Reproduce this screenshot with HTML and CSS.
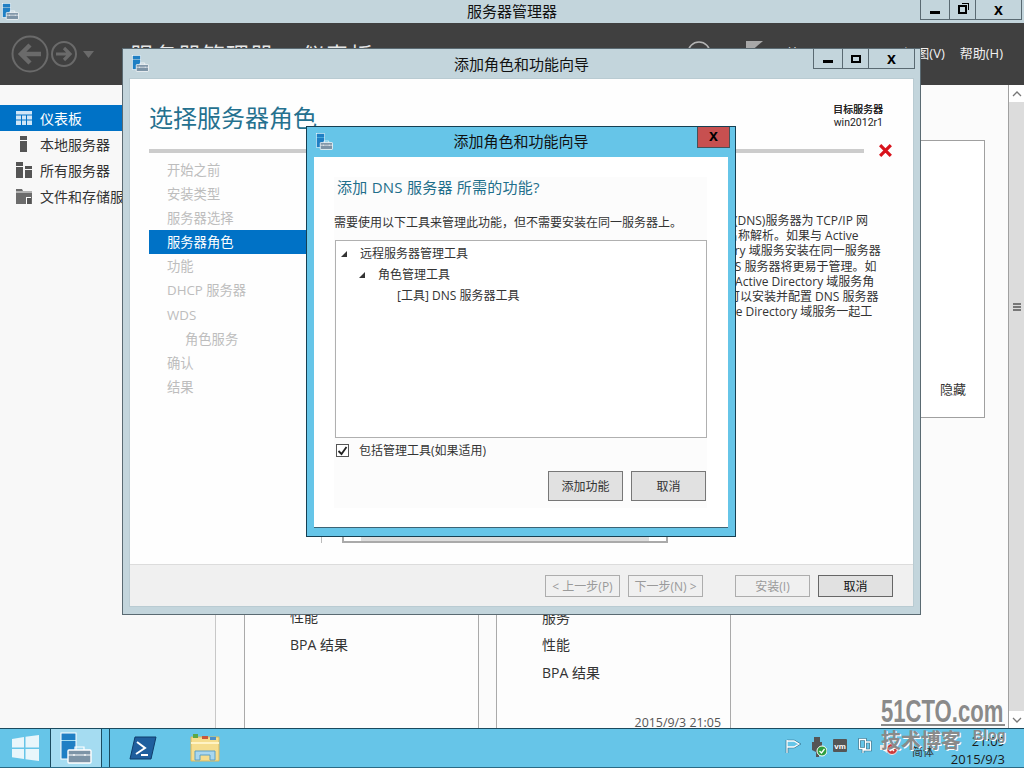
FILE: index.html
```html
<!DOCTYPE html>
<html lang="zh-CN">
  <head>
    <meta charset="UTF-8" />
    <title>服务器管理器</title>
    <link rel="stylesheet" href="styles.css">
  </head>
  <body>
    <svg class="defs" width="0" height="0">
      <symbol id="appIcon" viewBox="0 0 32 32">
        <rect x="1" y="1" width="15" height="7" fill="#1f7fc4"/>
        <rect x="1" y="9" width="15" height="18" fill="#1f7fc4"/>
        <rect x="1" y="1" width="15" height="26" fill="none" stroke="#fff" stroke-width="1"/>
        <rect x="8" y="18" width="23" height="13" rx="1" fill="#7d93a6" stroke="#fff" stroke-width="1.400"/>
        <path d="M15 18v-3h9v3M8 23h23M14 22v2M25 22v2" fill="none" stroke="#fff" stroke-width="1.200"/>
      </symbol>
    </svg>

    <div class="desktop">
      <!-- Главное окно -->
      <div class="titlebar">
        <svg class="app-icon"><use href="#appIcon"/></svg>
        <span class="title">服务器管理器</span>
        <div class="controls">
          <span class="ctl ctl-min"><i class="glyph-min"></i></span>
          <span class="ctl ctl-max"><i class="glyph-restore"></i></span>
          <span class="ctl ctl-close">x</span>
        </div>
      </div>

      <div class="navbar">
        <svg class="nav-arrows" width="100" height="44" viewBox="0 0 100 44">
          <g fill="none" stroke="#6a6a6a">
            <circle cx="19" cy="22" r="17.500" stroke-width="2"/>
            <path d="M30 22H11M19 13l-9 9 9 9" stroke-width="4.500"/>
            <circle cx="53" cy="22" r="12" stroke-width="2"/>
            <path d="M45 22h14M53 16l6 6-6 6" stroke-width="3.200"/>
          </g>
          <path d="M72 19h11l-5.500 7z" fill="#6a6a6a"/>
        </svg>
        <div class="breadcrumb">服务器管理器 <span class="dot">•</span> 仪表板</div>
        <svg class="nav-tools" width="90" height="30" viewBox="0 0 90 30">
          <circle cx="17" cy="13" r="11" fill="none" stroke="#b5b5b5" stroke-width="1.500"/>
          <path d="M44 8v12" stroke="#b5b5b5" stroke-width="1.500"/>
          <path d="M64 1h17L68 12h-4z" fill="#a8a8a8"/>
        </svg>
        <div class="menu">
          <span>管理(M)</span>
          <span>工具(T)</span>
          <span>视图(V)</span>
          <span>帮助(H)</span>
        </div>
      </div>

      <div class="main">
        <aside class="sidebar">
          <div class="side-item active">
            <svg width="16" height="16" viewBox="0 0 16 16"><path d="M0 1h16v14H0z" fill="#cfe6f7"/><path d="M0 5h16M0 10h16M5.500 5v10M10.500 5v10" stroke="#0072c6"/></svg>
            <span>仪表板</span>
          </div>
          <div class="side-item">
            <svg width="16" height="16" viewBox="0 0 16 16"><path d="M4 0h7v4H4zM4 5h7v11H4z" fill="#555"/></svg>
            <span>本地服务器</span>
          </div>
          <div class="side-item">
            <svg width="16" height="16" viewBox="0 0 16 16"><path d="M0 0h7v4H0zM0 5h7v11H0zM9 4h7v3H9zM9 8h7v8H9z" fill="#555"/></svg>
            <span>所有服务器</span>
          </div>
          <div class="side-item">
            <svg width="16" height="16" viewBox="0 0 16 16"><path d="M0 1h6l1 2h9v13H0z" fill="#6c6c6c"/><path d="M0 4h16" stroke="#f8f8f8"/><path d="M10 9h5v7h-5z" fill="#fff"/><path d="M11 10h4v6h-4z" fill="#555"/></svg>
            <span>文件和存储服务</span>
          </div>
        </aside>

        <section class="content">
          <div class="cards">
            <div class="card">
              <p>性能</p>
              <p>BPA 结果</p>
            </div>
            <div class="card card-wide">
              <p>服务</p>
              <p>性能</p>
              <p>BPA 结果</p>
              <time class="stamp">2015/9/3 21:05</time>
            </div>
          </div>
          <div class="hide-panel"><span>隐藏</span></div>
        </section>

        <div class="scrollbar">
          <span class="sb-btn">
            <svg width="10" height="6" viewBox="0 0 10 6"><path d="M1 5l4-4 4 4" fill="none" stroke="#777" stroke-width="1.300"/></svg>
          </span>
          <span class="sb-track"><i></i></span>
          <span class="sb-btn">
            <svg width="10" height="6" viewBox="0 0 10 6"><path d="M1 1l4 4 4-4" fill="none" stroke="#777" stroke-width="1.300"/></svg>
          </span>
        </div>
      </div>

      <!-- Панель задач -->
      <footer class="taskbar">
        <div class="task task-start">
          <svg width="27" height="26" viewBox="0 0 27 26"><path d="M0 4l12-2v10.500H0zM13.500 1.700L27 0v12.500H13.500zM0 14h12v10L0 22.300zM13.500 14H27v12l-13.500-1.800z" fill="#e8f6fb"/></svg>
        </div>
        <div class="task task-active"><svg class="task-app"><use href="#appIcon"/></svg></div>
        <div class="task-sep"></div>
        <div class="task task-ps">
          <svg width="28" height="24" viewBox="0 0 28 24"><path d="M6 1h21l-5 22H1z" fill="#1f5f9e" stroke="#0f3d6b"/><path d="M8 6l8 6-9 6" fill="none" stroke="#fff" stroke-width="2"/><path d="M12 19h7" stroke="#fff" stroke-width="2"/></svg>
        </div>
        <div class="task task-folder">
          <svg width="32" height="30" viewBox="0 0 32 30"><path d="M2 4h28v24H2z" fill="#f5dd8e" stroke="#d9b860"/><path d="M2 10h28" stroke="#fff3c4" stroke-width="2"/><path d="M4 1h5v4H4z" fill="#5aa845"/><path d="M13 3h6v3h-6z" fill="#c9573a"/><path d="M21 4h6v3h-6z" fill="#4b8fc9"/><path d="M6 27V18h20v9h-5v-5H11v5z" fill="#a8d7ef" stroke="#5d9fc4"/></svg>
        </div>
        <div class="tray">
          <svg class="tray-flag" width="16" height="14" viewBox="0 0 16 14"><path d="M2 1v13M2 2h7l5 3-5 3H2" fill="none" stroke="#2f6a84" stroke-width="2.600"/><path d="M2 1v13M2 2h7l5 3-5 3H2z" fill="#66c5e8" stroke="#fff" stroke-width="1.300"/></svg>
          <svg class="tray-usb" width="15" height="20" viewBox="0 0 15 20"><path d="M2 0h6v5H2zM0 5h10v8l-3 2v5H4v-5l-4-2z" fill="#555"/><circle cx="10" cy="14" r="5" fill="#2f9e3f" stroke="#fff"/><path d="M7.500 14l2 2 3-4" fill="none" stroke="#fff" stroke-width="1.300"/></svg>
          <svg class="tray-vm" width="14" height="13" viewBox="0 0 14 13"><rect width="14" height="13" rx="1" fill="#555"/><text x="7" y="9.500" class="vm-text">vm</text></svg>
          <svg class="tray-net" width="14" height="17" viewBox="0 0 14 17"><path d="M1.500 1.500h6v9h-6zM8 4h4.500v8H5v3" fill="none" stroke="#2f6a84" stroke-width="2.600"/><path d="M1.500 1.500h6v9h-6zM8 4h4.500v8H5v3" fill="none" stroke="#fff" stroke-width="1.300"/></svg>
          <svg class="tray-vol" width="18" height="14" viewBox="0 0 18 14"><path d="M0 4h3l4-3v11L3 9H0z" fill="#e8e8e8"/><circle cx="12" cy="8" r="5.500" fill="#cc3b3b" stroke="#eee"/><path d="M10 6l4 4M14 6l-4 4" stroke="#fff" stroke-width="1.300"/></svg>
          <span class="tray-lang">简体</span>
          <div class="clock">
            <span>21:09</span>
            <span>2015/9/3</span>
          </div>
        </div>
      </footer>

      <!-- Мастер -->
      <div class="window wizard">
        <div class="win-title">
          <svg class="app-icon"><use href="#appIcon"/></svg>
          <span class="title">添加角色和功能向导</span>
          <div class="controls">
            <span class="ctl ctl-min"><i class="glyph-min"></i></span>
            <span class="ctl ctl-max2"><i class="glyph-max"></i></span>
            <span class="ctl ctl-close2">x</span>
          </div>
        </div>
        <div class="wiz-body">
          <div class="wiz-main">
            <div class="wiz-head">
              <h1>选择服务器角色</h1>
              <div class="target">
                <strong>目标服务器</strong>
                <span>win2012r1</span>
              </div>
            </div>
            <div class="rule-row">
              <div class="rule"></div>
              <svg width="15" height="15" viewBox="0 0 14 14"><path d="M2 2l10 10M12 2L2 12" stroke="#d8121b" stroke-width="3"/></svg>
            </div>
            <div class="wiz-cols">
              <ul class="steps">
                <li>开始之前</li>
                <li>安装类型</li>
                <li>服务器选择</li>
                <li class="current">服务器角色</li>
                <li>功能</li>
                <li>DHCP 服务器</li>
                <li>WDS</li>
                <li class="sub">角色服务</li>
                <li>确认</li>
                <li>结果</li>
              </ul>
              <div class="roles">
                <div class="roles-list"></div>
                <div class="roles-hscroll">
                  <span class="hs-btn"></span><span class="hs-thumb">≡</span><span class="hs-btn"></span>
                </div>
              </div>
              <div class="desc">
                <span>域名系统(DNS)服务器为 TCP/IP 网</span>
                <span>络提供名称解析。如果与 Active</span>
                <span>Directory 域服务安装在同一服务器</span>
                <span>上，DNS 服务器将更易于管理。如</span>
                <span>果选择 Active Directory 域服务角</span>
                <span>色，则可以安装并配置 DNS 服务器</span>
                <span>和 Active Directory 域服务一起工</span>
              </div>
            </div>
          </div>
          <div class="wiz-foot">
            <button class="btn" disabled>&lt; 上一步(P)</button>
            <button class="btn" disabled>下一步(N) &gt;</button>
            <button class="btn btn-gap" disabled>安装(I)</button>
            <button class="btn btn-default">取消</button>
          </div>
        </div>
      </div>

      <!-- Диалог -->
      <div class="window dialog">
        <div class="win-title dlg-title">
          <svg class="app-icon"><use href="#appIcon"/></svg>
          <span class="title">添加角色和功能向导</span>
          <span class="dlg-close">x</span>
        </div>
        <div class="dlg-body">
          <div class="dlg-inner">
            <h2>添加 DNS 服务器 所需的功能?</h2>
            <p class="dlg-text">需要使用以下工具来管理此功能，但不需要安装在同一服务器上。</p>
            <div class="tree">
              <div class="tree-row"><i class="tri"></i>远程服务器管理工具</div>
              <div class="tree-row lvl2"><i class="tri"></i>角色管理工具</div>
              <div class="tree-row lvl3">[工具] DNS 服务器工具</div>
            </div>
            <label class="check">
              <span class="box">
                <svg width="11" height="10" viewBox="0 0 11 10"><path d="M1.500 5l3 3 5-7" fill="none" stroke="#222" stroke-width="1.800"/></svg>
              </span>
              包括管理工具(如果适用)
            </label>
            <div class="dlg-btns">
              <button class="btn-dlg">添加功能</button>
              <button class="btn-dlg">取消</button>
            </div>
          </div>
        </div>
      </div>

      <!-- Водяной знак -->
      <div class="watermark">
        <div class="wm-top"><span>51CTO.com</span></div>
        <div class="wm-bottom">技术博客<span>Blog</span></div>
      </div>
    </div>
  </body>
</html>
```

FILE: styles.css
```css
* {
  box-sizing: border-box;
}

html, body {
  margin: 0;
  padding: 0;
}

body {
  width: 1024px;
  height: 768px;
  overflow: hidden;
  font-family: "Open Sans", "Noto Sans CJK SC", sans-serif;
  font-size: 13px;
  color: #333;
}

.defs {
  position: absolute;
}

.desktop {
  position: relative;
  width: 1024px;
  height: 768px;
  display: flex;
  flex-direction: column;
  overflow: hidden;
}

/* title bars */
.titlebar {
  position: relative;
  height: 23px;
  flex: none;
  background: #c3d5dc;
  display: flex;
  justify-content: center;
}

.title {
  font-size: 15px;
  line-height: 22px;
  color: #111;
}

.app-icon {
  position: absolute;
  left: 2px;
  top: 3px;
  width: 17px;
  height: 17px;
}

.controls {
  position: absolute;
  right: 2px;
  top: 0;
  display: flex;
  height: 20px;
  border: 1px solid #5a6a72;
  border-top: 0;
}

.ctl {
  display: flex;
  align-items: center;
  justify-content: center;
  height: 19px;
  border-left: 1px solid #5a6a72;
  font: bold 13px/1 "Liberation Sans", sans-serif;
  color: #000;
}

.ctl:first-child {
  border-left: 0;
}

.ctl-min {
  width: 28px;
}

.ctl-max {
  width: 26px;
}

.ctl-max2 {
  width: 26px;
}

.ctl-close {
  width: 46px;
  font-size: 16px;
}

.ctl-close2 {
  width: 46px;
  font-size: 16px;
}

.glyph-min {
  width: 10px;
  height: 3px;
  margin-top: 6px;
  background: #000;
}

.glyph-max {
  width: 10px;
  height: 8px;
  border: 2px solid #000;
}

.glyph-restore {
  width: 9px;
  height: 9px;
  border: 2px solid #000;
  box-shadow: 2px -2px 0 -1px #c3d5dc, 3px -3px 0 -1px #000;
}

/* nav */
.navbar {
  position: relative;
  height: 62px;
  flex: none;
  background: #404040;
  display: flex;
  align-items: center;
  padding-left: 11px;
}

.nav-arrows {
  flex: none;
}

.breadcrumb {
  margin-left: 19px;
  font-size: 23px;
  letter-spacing: 1px;
  color: #e6e6e6;
  white-space: nowrap;
}

.dot {
  margin: 0 2px;
}

.nav-tools {
  position: absolute;
  left: 682px;
  top: 17px;
}

.menu {
  position: absolute;
  right: 21px;
  top: 20px;
  display: flex;
  gap: 15px;
  color: #f0f0f0;
  font-size: 13px;
  white-space: nowrap;
}

/* main area */
.main {
  flex: 1;
  display: flex;
  background: #f7f7f7;
  min-height: 0;
}

.sidebar {
  width: 216px;
  flex: none;
  padding-top: 20px;
  border-right: 1px solid #c8c8c8;
  background: #f8f8f8;
}

.side-item {
  height: 26px;
  display: flex;
  align-items: center;
  gap: 8px;
  padding-left: 16px;
  font-size: 14px;
  color: #333;
  white-space: nowrap;
}

.side-item.active {
  background: #0072c6;
  color: #fff;
}

.content {
  position: relative;
  flex: 1;
  display: flex;
  padding-left: 28px;
  background: #fbfbfb;
}

.cards {
  display: flex;
  gap: 17px;
}

.card {
  position: relative;
  width: 235px;
  background: #fdfdfd;
  border: 1px solid #aaa;
  border-width: 0 1px;
  display: flex;
  flex-direction: column;
  justify-content: flex-end;
  padding: 0 0 70px 45px;
  font-size: 14px;
  color: #333;
}

.card-wide {
  padding-bottom: 42px;
}

.card p {
  margin: 0;
  height: 27.500px;
  line-height: 27.500px;
}

.stamp {
  position: absolute;
  right: 9px;
  bottom: -3px;
  font-size: 12.400px;
  color: #555;
  white-space: nowrap;
}

.hide-panel {
  position: absolute;
  left: 704px;
  top: 55px;
  width: 65px;
  height: 278px;
  background: #fff;
  border: 1px solid #a0a0a0;
  display: flex;
  align-items: flex-end;
  padding: 0 0 19px 19px;
}

.scrollbar {
  width: 16px;
  flex: none;
  display: flex;
  flex-direction: column;
  border-left: 1px solid #a0a0a0;
}

.sb-btn {
  height: 17px;
  flex: none;
  background: #fff;
  display: flex;
  align-items: center;
  justify-content: center;
}

.sb-track {
  flex: 1;
  background: #dcdcdc;
  display: flex;
  align-items: center;
  justify-content: center;
}

.sb-track i {
  width: 8px;
  height: 8px;
  border-top: 2px solid #777;
  border-bottom: 2px solid #777;
  background: linear-gradient(#777, #777) center / 8px 2px no-repeat;
  margin-bottom: 200px;
}

/* taskbar */
.taskbar {
  height: 40px;
  flex: none;
  background: #66c5e8;
  border-top: 1px solid #1b4a5e;
  border-bottom: 1px solid #2a6a85;
  display: flex;
  position: relative;
}

.task {
  display: flex;
  align-items: center;
  justify-content: center;
  width: 51px;
  flex: none;
}

.task-start {
  border-right: 1px solid #1b4a5e;
}

.task-active {
  background: #a5dcf1;
  border-right: 1px solid #1b4a5e;
}

.task-app {
  width: 32px;
  height: 34px;
}

.task-sep {
  width: 8px;
  flex: none;
  border-right: 1px solid #1b4a5e;
}

.task-ps {
  width: 66px;
}

.task-folder {
  width: 60px;
  margin-left: -1px;
}

.tray {
  position: absolute;
  right: 0;
  top: 0;
  bottom: 0;
  width: 240px;
}

.tray svg,
.tray-lang {
  position: absolute;
}

.tray-flag {
  left: 1px;
  top: 10px;
}

.tray-usb {
  left: 28px;
  top: 8px;
}

.tray-vm {
  left: 49px;
  top: 10px;
}

.tray-net {
  left: 74px;
  top: 9px;
}

.tray-vol {
  left: 96px;
  top: 12px;
}

.vm-text {
  font: bold 8px "Liberation Sans", sans-serif;
  fill: #fff;
  text-anchor: middle;
}

.tray-lang {
  left: 128px;
  top: 14px;
  font-size: 11px;
  color: #333;
}

.clock {
  position: absolute;
  right: 19px;
  top: 3px;
  display: flex;
  flex-direction: column;
  align-items: flex-end;
  font-size: 13px;
  line-height: 18px;
  color: #1a1a1a;
}

/* windows */
.window {
  position: absolute;
  display: flex;
  flex-direction: column;
}

.wizard {
  left: 122px;
  top: 48px;
  width: 799px;
  height: 567px;
  background: #c3d5dc;
  border: 1px solid #5a6a72;
  padding: 0 6px 7px;
}

.win-title {
  position: relative;
  height: 29px;
  flex: none;
  display: flex;
  justify-content: center;
  align-items: center;
}

.wizard .app-icon {
  left: 3px;
  top: 6px;
}

.wizard .controls {
  right: -1px;
}

.wiz-body {
  flex: 1;
  display: flex;
  flex-direction: column;
  background: #fefefe;
  border: 1px solid #b9cbd2;
  min-height: 0;
}

.wiz-main {
  flex: 1;
  padding: 0 20px 0 19px;
  min-height: 0;
}

.wiz-head {
  height: 69px;
  display: flex;
  justify-content: space-between;
  padding-top: 19px;
}

.wiz-head h1 {
  margin: 0;
  font-size: 24px;
  line-height: 40px;
  font-weight: 400;
  color: #25718f;
}

.target {
  display: flex;
  flex-direction: column;
  align-items: flex-end;
  padding: 5px 10px 0 0;
  font-size: 10.500px;
  line-height: 13px;
  color: #222;
}

.target strong {
  font-size: 10px;
  font-weight: 400;
  text-shadow: 0.3px 0 0 #222;
}

.target span {
  font-family: Roboto, sans-serif;
}

.rule-row {
  display: flex;
  align-items: center;
  height: 5px;
  gap: 14px;
}

.rule {
  width: 717px;
  height: 4px;
  background: #ccc;
}

.wiz-cols {
  display: flex;
  padding-top: 5px;
}

.steps {
  list-style: none;
  margin: 0;
  padding: 0;
  width: 157px;
  flex: none;
  font-size: 13.300px;
  color: #bdbdbd;
}

.steps li {
  height: 24.100px;
  line-height: 24px;
  padding-left: 18px;
  white-space: nowrap;
}

.steps .current {
  background: #0072c6;
  color: #fff;
}

.steps .sub {
  padding-left: 36px;
}

.roles {
  width: 363px;
  flex: none;
  height: 385px;
  margin-left: 15px;
  border-left: 1px solid #bbb;
  position: relative;
}

.roles-hscroll {
  position: absolute;
  left: 20px;
  bottom: 0;
  width: 326px;
  height: 14px;
  display: flex;
  border: 2px solid #aaa;
  border-top: 0;
}

.hs-btn {
  width: 17px;
  background: #fff;
  flex: none;
}

.hs-thumb {
  flex: 1;
  background: #dcdcdc;
  text-align: center;
  font-size: 9px;
  line-height: 12px;
}

.desc {
  display: flex;
  flex-direction: column;
  align-items: flex-start;
  margin: 55px 0 0 2px;
  font-size: 12px;
  line-height: 15.200px;
  color: #333;
  white-space: nowrap;
}

/* lines of the wrapped text start a little apart, same as the original */
.desc span:nth-child(2) { margin-left: 4px; }
.desc span:nth-child(3) { margin-left: 8px; }
.desc span:nth-child(4) { margin-left: 7px; }
.desc span:nth-child(5) { margin-left: 10px; }
.desc span:nth-child(6) { margin-left: 6px; }
.desc span:nth-child(7) { margin-left: 8px; }

.wiz-foot {
  height: 42px;
  flex: none;
  background: #f0f0f0;
  border-top: 1px solid #dcdcdc;
  display: flex;
  justify-content: flex-end;
  align-items: flex-start;
  gap: 8px;
  padding: 10px 20px 0 0;
}

.btn {
  width: 75px;
  height: 22px;
  padding: 0;
  background: #f0f0f0;
  border: 1px solid #adadad;
  font: 12px "Open Sans", "Noto Sans CJK SC", sans-serif;
  color: #9a9a9a;
  white-space: nowrap;
}

.btn-gap {
  margin-left: 24px;
}

.btn-default {
  background: #e1e1e1;
  border-color: #666;
  color: #111;
}

/* dialog */
.dialog {
  left: 306px;
  top: 126px;
  width: 430px;
  height: 411px;
  background: #66c5e8;
  border: 1px solid #163f52;
  padding: 0 7px 8px;
}

.dlg-title {
  height: 30px;
}

.dlg-title .title {
  margin-bottom: 2px;
}

.dialog .app-icon {
  left: 2px;
  top: 6px;
}

.dlg-close {
  position: absolute;
  right: -2px;
  top: 0;
  width: 33px;
  height: 21px;
  background: #c75050;
  border: 1px solid #44525a;
  border-top: 0;
  text-align: center;
  font: bold 16px/18px "Liberation Sans", sans-serif;
  color: #000;
}

.dlg-body {
  flex: 1;
  background: #fff;
  border-bottom: 1px solid #3c6475;
  padding: 20px 21px 19px 20px;
  min-height: 0;
}

.dlg-inner {
  height: 100%;
  background: #fcfcfc;
  display: flex;
  flex-direction: column;
}

.dlg-inner h2 {
  margin: 0;
  padding: 0 0 0 3px;
  font-size: 15px;
  font-weight: 400;
  letter-spacing: 0.25px;
  line-height: 20px;
  color: #1f6f8b;
}

.dlg-text {
  margin: 17px 0 0;
  font-size: 12px;
  line-height: 18px;
  color: #333;
  white-space: nowrap;
}

.tree {
  height: 198px;
  margin: 8px 0 0 1px;
  background: #fff;
  border: 1px solid #b0b0b0;
  padding-top: 2px;
  font-size: 12px;
}

.tree-row {
  height: 21px;
  line-height: 21px;
  display: flex;
  align-items: center;
  padding-left: 24px;
  position: relative;
  white-space: nowrap;
}

.lvl2 {
  padding-left: 42px;
}

.lvl3 {
  padding-left: 61px;
}

.tri {
  position: absolute;
  margin-left: -19px;
  width: 0;
  height: 0;
  border-left: 6px solid transparent;
  border-bottom: 6px solid #333;
}

.check {
  display: flex;
  align-items: center;
  gap: 10px;
  margin: 4px 0 1px 2px;
  height: 15px;
  font-size: 12px;
}

.box {
  width: 13px;
  height: 13px;
  margin-top: 2px;
  background: #fff;
  border: 1px solid #555;
  display: flex;
  align-items: center;
  justify-content: center;
}

.dlg-btns {
  display: flex;
  justify-content: flex-end;
  gap: 8px;
  margin: 13px 1px 0 0;
}

.btn-dlg {
  width: 75px;
  height: 30px;
  padding: 0;
  background: #e1e1e1;
  border: 1px solid #777;
  font: 12px "Open Sans", "Noto Sans CJK SC", sans-serif;
  color: #333;
}

/* watermark */
.watermark {
  position: absolute;
  left: 881px;
  top: 693px;
  width: 124px;
  color: #8a8a8a;
  font-family: "Liberation Sans", "Noto Sans CJK SC", sans-serif;
  font-weight: 700;
  text-shadow: 1px 1px 0 #fff;
}

.wm-top {
  height: 33px;
  line-height: 36px;
  font-size: 32px;
  border-bottom: 2px solid #8a8a8a;
  white-space: nowrap;
}

.wm-top span {
  display: inline-block;
  transform: scaleX(0.69);
  transform-origin: left center;
}

.wm-bottom {
  position: relative;
  font-size: 20px;
  line-height: 24px;
  margin-top: 3px;
  white-space: nowrap;
}

.wm-bottom span {
  position: absolute;
  left: 92px;
  top: -6px;
  font-size: 14px;
  letter-spacing: 0.5px;
}
```
